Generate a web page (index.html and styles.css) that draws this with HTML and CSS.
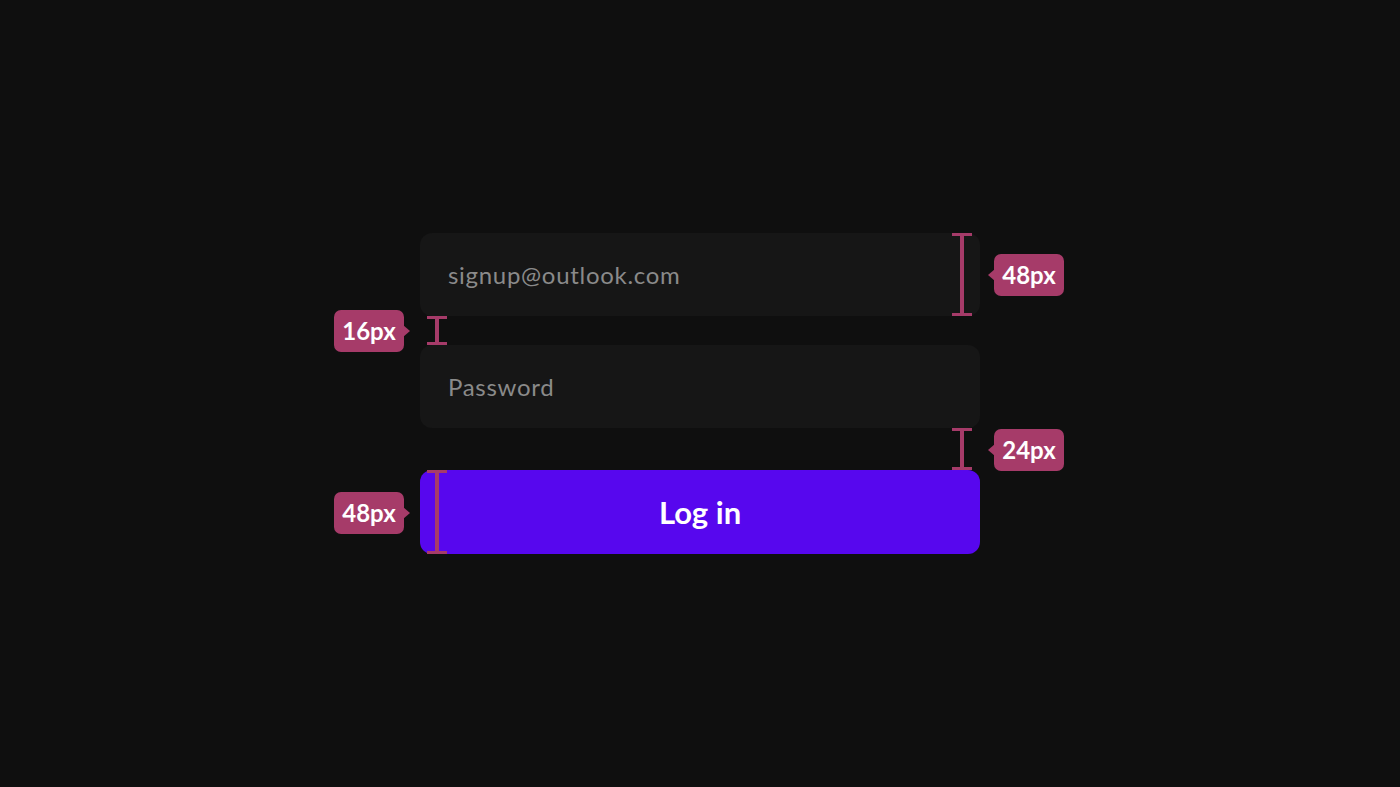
FILE: index.html
```html
<!DOCTYPE html>
<html lang="en">
<head>
  <meta charset="UTF-8" />
  <meta name="viewport" content="width=device-width, initial-scale=1.0" />
  <title>Login spacing spec</title>
  <link rel="stylesheet" href="styles.css">
</head>
<body>

  <section class="spec">
    <form class="login" onsubmit="return false">
      <input class="field" type="email" placeholder="signup@outlook.com" />
      <input class="field field-pass" type="password" placeholder="Password" />
      <button class="btn-login" type="submit">Log in</button>
    </form>

    <!-- redline annotations -->
    <div class="measure m-input"></div>
    <div class="tag tag-right t-input">48px</div>

    <div class="measure m-gap"></div>
    <div class="tag tag-left t-gap">16px</div>

    <div class="measure m-space"></div>
    <div class="tag tag-right t-space">24px</div>

    <div class="measure m-button"></div>
    <div class="tag tag-left t-button">48px</div>
  </section>

</body>
</html>
```

FILE: styles.css
```css
* {
  margin: 0;
  padding: 0;
  box-sizing: border-box;
}
body {
  font-family: Lato, 'Noto Sans', sans-serif;
  background: #0f0f0f;
  display: flex;
  justify-content: center;
  align-items: center;
  min-height: 100vh;
}
.spec {
  position: relative;
  width: 560px;
}
.login {
  display: flex;
  flex-direction: column;
}
.field {
  height: 83px;
  border: none;
  border-radius: 12px;
  background: #161616;
  padding: 0 28px;
  font-family: inherit;
  font-size: 24px;
  color: #ddd;
  outline: none;
}
.field::placeholder {
  color: #8a8a8a;
  letter-spacing: 0.7px;
}
.field-pass {
  margin-top: 29px;
}
.btn-login {
  margin-top: 42px;
  height: 84px;
  border: none;
  border-radius: 12px;
  background: #5707ee;
  color: #fff;
  font-family: inherit;
  font-size: 31px;
  font-weight: 700;
  cursor: pointer;
}

/* measure lines */
.measure {
  position: absolute;
  width: 20px;
  border-top: 3px solid #a63b69;
  border-bottom: 3px solid #a63b69;
}
.measure::before {
  content: '';
  position: absolute;
  left: 8px;
  top: 0;
  bottom: 0;
  width: 4px;
  background: #a63b69;
}
.m-input {
  left: 532px;
  top: 0;
  height: 83px;
}
.m-gap {
  left: 7px;
  top: 83px;
  height: 29px;
}
.m-space {
  left: 532px;
  top: 195px;
  height: 42px;
}
.m-button {
  left: 7px;
  top: 237px;
  height: 84px;
}

/* labels */
.tag {
  position: absolute;
  width: 70px;
  height: 42px;
  border-radius: 7px;
  background: #a63b69;
  color: #fff;
  font-size: 24px;
  font-weight: 700;
  line-height: 42px;
  text-align: center;
}
.tag::after {
  content: '';
  position: absolute;
  top: 15px;
  border-top: 6px solid transparent;
  border-bottom: 6px solid transparent;
}
.tag-right::after {
  left: -6px;
  border-right: 7px solid #a63b69;
}
.tag-left::after {
  right: -6px;
  border-left: 7px solid #a63b69;
}
.tag-right {
  left: 574px;
}
.tag-left {
  left: -86px;
}
.t-input {
  top: 21px;
}
.t-gap {
  top: 77px;
}
.t-space {
  top: 196px;
}
.t-button {
  top: 259px;
}
```
